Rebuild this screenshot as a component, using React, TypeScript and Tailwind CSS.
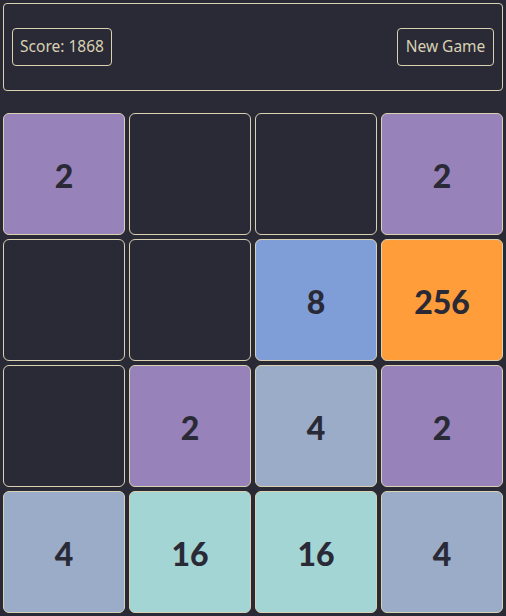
import React from "react";

const tiles: (number | null)[] = [
  2, null, null, 2,
  null, null, 8, 256,
  null, 2, 4, 2,
  4, 16, 16, 4,
];

function tileClass(v: number | null): string {
  switch (v) {
    case 2:
      return "bg-[#9782b9]";
    case 4:
      return "bg-[#9bacc9]";
    case 8:
      return "bg-[#7f9ed8]";
    case 16:
      return "bg-[#a3d5d5]";
    case 256:
      return "bg-[#ff9d3a]";
    default:
      return "bg-[#2a2a37]";
  }
}

export default function App() {
  return (
    <div className="w-[506px] h-[616px] bg-[#2a2a37] p-[3px] flex flex-col" style={{ fontFamily: "'Noto Sans', 'Open Sans', sans-serif" }}>
      <div className="h-[88px] border border-[#d9d1b1] rounded-[4px] flex items-center justify-between px-[8px]">
        <div className="h-[38px] w-[100px] border border-[#d9d1b1] rounded-[4px] flex items-center justify-center text-[15.5px] text-[#d9d1b1]">
          Score: 1868
        </div>
        <button className="h-[38px] w-[97px] border border-[#d9d1b1] rounded-[4px] flex items-center justify-center text-[15.5px] text-[#d9d1b1]">
          New Game
        </button>
      </div>
      <div className="mt-[22px] grid grid-cols-4 gap-[4px]">
        {tiles.map((v, i) => (
          <div
            key={i}
            className={`h-[122px] pt-[4px] rounded-[6px] border border-[#d9d1b1] flex items-center justify-center text-[32px] font-black text-[#2a2a37] ${tileClass(v)}`}
            style={{ fontFamily: "Lato, 'Noto Sans', sans-serif" }}
          >
            {v ?? ""}
          </div>
        ))}
      </div>
    </div>
  );
}
